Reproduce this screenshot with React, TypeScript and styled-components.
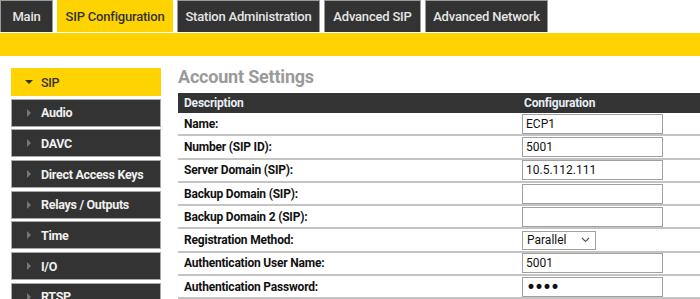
import React from 'react'
import styled, { createGlobalStyle } from 'styled-components'

const YELLOW = '#ffd300'
const DARK = '#333333'

const GlobalStyle = createGlobalStyle`
  html, body {
    margin: 0;
    padding: 0;
    background: #ffffff;
  }
  body {
    font-family: Roboto, "Liberation Sans", sans-serif;
  }
`

const Page = styled.div`
  width: 700px;
  height: 299px;
  overflow: hidden;
`

const TabBar = styled.div`
  display: flex;
  gap: 4px;
  height: 32px;
  border-bottom: 1px solid #ffffff;
`

const Tab = styled.div<{ active?: boolean; w: number }>`
  width: ${({ w }) => w}px;
  box-sizing: border-box;
  display: flex;
  align-items: center;
  justify-content: center;
  font-size: 13px;
  font-weight: 500;
  letter-spacing: -0.2px;
  background: ${({ active }) => (active ? YELLOW : DARK)};
  color: ${({ active }) => (active ? '#333333' : '#e6e6e6')};
  border: 1px solid ${({ active }) => (active ? YELLOW : '#9a9a9a')};
  border-bottom: none;
`

const YellowBar = styled.div`
  height: 23px;
  background: ${YELLOW};
`

const Body = styled.div`
  display: flex;
  gap: 17px;
  padding: 12px 0 0 11px;
`

const SideNav = styled.div`
  width: 150px;
  flex-shrink: 0;
  display: flex;
  flex-direction: column;
  gap: 2.7px;
`

const NavItem = styled.div<{ active?: boolean }>`
  height: 28px;
  box-sizing: border-box;
  display: flex;
  align-items: center;
  gap: ${({ active }) => (active ? 8 : 10)}px;
  padding-left: ${({ active }) => (active ? 13 : 15)}px;
  font-size: 12.5px;
  font-weight: ${({ active }) => (active ? 500 : 700)};
  letter-spacing: -0.3px;
  background: ${({ active }) => (active ? YELLOW : DARK)};
  color: ${({ active }) => (active ? '#333333' : '#f0f0f0')};
  border: 1px solid ${({ active }) => (active ? YELLOW : '#a8a8a8')};
`

const Arrow = styled.span<{ open?: boolean }>`
  width: 0;
  height: 0;
  ${({ open }) =>
    open
      ? `border-left: 4px solid transparent;
         border-right: 4px solid transparent;
         border-top: 4px solid #333;`
      : `border-top: 4px solid transparent;
         border-bottom: 4px solid transparent;
         border-left: 4px solid #777;`}
`

const Content = styled.div`
  flex: 1;
  min-width: 0;
`

const Heading = styled.h2`
  margin: 0 0 7px 0;
  font-size: 18px;
  line-height: 18px;
  font-weight: 700;
  letter-spacing: -0.2px;
  color: #9a9a9a;
`

const Table = styled.div`
  display: grid;
  grid-template-columns: 344px 1fr;
`

const HeadCell = styled.div`
  height: 20px;
  display: flex;
  align-items: center;
  padding-left: 6px;
  background: ${DARK};
  color: #e8eef5;
  font-size: 12px;
  font-weight: 700;
  letter-spacing: -0.2px;
`

const ValueHead = styled(HeadCell)`
  padding-left: 2px;
`

const Cell = styled.div`
  height: 23.3px;
  box-sizing: border-box;
  display: flex;
  align-items: center;
  border-bottom: 2px solid #c4c4c4;
`

const LabelCell = styled(Cell)`
  padding-left: 6px;
  font-size: 12px;
  font-weight: 700;
  letter-spacing: -0.2px;
  color: #111111;
`

const TextInput = styled.input<{ secret?: boolean }>`
  width: 141px;
  height: 20px;
  box-sizing: border-box;
  margin: 0;
  padding: 0 3px;
  border: 1px solid #a0a0a0;
  font-family: ${({ secret }) => (secret ? '"DejaVu Sans", sans-serif' : 'Roboto, "Liberation Sans", sans-serif')};
  font-size: ${({ secret }) => (secret ? 17 : 12)}px;
  letter-spacing: ${({ secret }) => (secret ? -2 : 0)}px;
  color: #111;
  outline: none;
`

const SelectBox = styled.div`
  width: 74px;
  height: 19px;
  box-sizing: border-box;
  display: flex;
  align-items: center;
  justify-content: space-between;
  padding: 0 5px 0 4px;
  border: 1px solid #a0a0a0;
  font-size: 12px;
  color: #111;
`

const navItems = ['SIP', 'Audio', 'DAVC', 'Direct Access Keys', 'Relays / Outputs', 'Time', 'I/O', 'RTSP']

const rows: { label: string; value?: string; kind?: 'text' | 'password' | 'select' }[] = [
  { label: 'Name:', value: 'ECP1' },
  { label: 'Number (SIP ID):', value: '5001' },
  { label: 'Server Domain (SIP):', value: '10.5.112.111' },
  { label: 'Backup Domain (SIP):', value: '' },
  { label: 'Backup Domain 2 (SIP):', value: '' },
  { label: 'Registration Method:', value: 'Parallel', kind: 'select' },
  { label: 'Authentication User Name:', value: '5001' },
  { label: 'Authentication Password:', value: 'abcd', kind: 'password' },
]

export default function App() {
  return (
    <Page>
      <GlobalStyle />
      <TabBar>
        <Tab w={53}>Main</Tab>
        <Tab w={116} active>SIP Configuration</Tab>
        <Tab w={143}>Station Administration</Tab>
        <Tab w={97}>Advanced SIP</Tab>
        <Tab w={123}>Advanced Network</Tab>
      </TabBar>
      <YellowBar />
      <Body>
        <SideNav>
          {navItems.map((item, i) => (
            <NavItem key={item} active={i === 0}>
              <Arrow open={i === 0} />
              {item}
            </NavItem>
          ))}
        </SideNav>
        <Content>
          <Heading>Account Settings</Heading>
          <Table>
            <HeadCell>Description</HeadCell>
            <ValueHead>Configuration</ValueHead>
            {rows.map((row) => (
              <React.Fragment key={row.label}>
                <LabelCell>{row.label}</LabelCell>
                <Cell>
                  {row.kind === 'select' ? (
                    <SelectBox>
                      {row.value}
                      <svg width="9" height="6" viewBox="0 0 9 6">
                        <path d="M1 1l3.5 3.5L8 1" fill="none" stroke="#555" strokeWidth="1.1" />
                      </svg>
                    </SelectBox>
                  ) : (
                    <TextInput
                      type={row.kind === 'password' ? 'password' : 'text'}
                      secret={row.kind === 'password'}
                      defaultValue={row.value}
                      readOnly
                    />
                  )}
                </Cell>
              </React.Fragment>
            ))}
          </Table>
        </Content>
      </Body>
    </Page>
  )
}
